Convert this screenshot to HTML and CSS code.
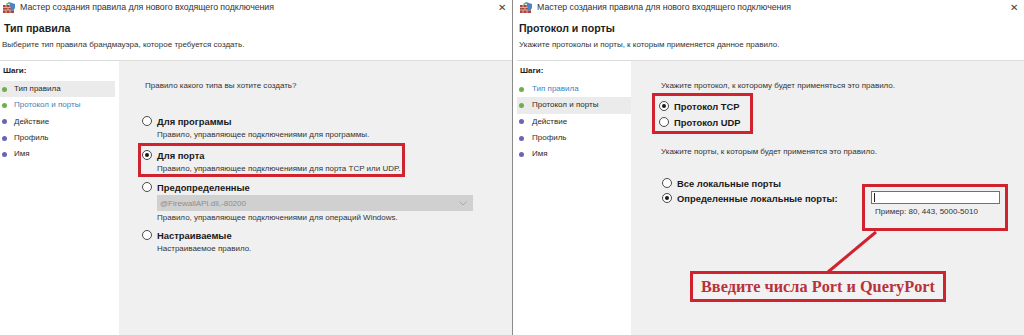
FILE: index.html
```html
<!DOCTYPE html>
<html lang="ru">
<head>
    <meta charset="UTF-8">
    <title>Мастер создания правила</title>
    <link rel="stylesheet" href="styles.css">
</head>
<body>
<div class="screen">

    <!-- Шаг 1 : тип правила -->
    <div class="dialog">
        <div class="titlebar">
            <svg class="app-icon" width="13" height="12" viewBox="0 0 13 12">
                <rect x="0" y="4" width="11" height="8" fill="#a9473a"/>
                <path d="M0 6.5h11M0 9h11M3 4v2.5M7 4v2.5M5 6.5V9M9 6.5V9M3 9v3M7 9v3" stroke="#e6c2b6" stroke-width="0.8"/>
                <path d="M6 1l6 2v3.5c0 2-2.5 3-3.5 3.5" fill="#4a86c7"/>
                <path d="M3 3l3-2 1 1-3 2z" fill="#5fa64a"/>
            </svg>
            <span class="title-text">Мастер создания правила для нового входящего подключения</span>
            <span class="close">&#x2715;</span>
        </div>
        <div class="header">
            <div class="page-title">Тип правила</div>
            <div class="page-sub">Выберите тип правила брандмауэра, которое требуется создать.</div>
        </div>
        <div class="body">
            <div class="steps">
                <div class="steps-head">Шаги:</div>
                <div class="step current"><span class="dot done"></span>Тип правила</div>
                <div class="step link"><span class="dot done"></span>Протокол и порты</div>
                <div class="step"><span class="dot"></span>Действие</div>
                <div class="step"><span class="dot"></span>Профиль</div>
                <div class="step"><span class="dot"></span>Имя</div>
            </div>
            <div class="main">
                <div class="question">Правило какого типа вы хотите создать?</div>
                <div class="options">
                    <div class="option">
                        <div class="opt-label"><span class="radio"></span>Для программы</div>
                        <div class="opt-desc">Правило, управляющее подключениями для программы.</div>
                    </div>
                    <div class="option marked">
                        <div class="opt-label"><span class="radio checked"></span>Для порта</div>
                        <div class="opt-desc">Правило, управляющее подключениями для порта TCP или UDP.</div>
                    </div>
                    <div class="option spaced">
                        <div class="opt-label"><span class="radio"></span>Предопределенные</div>
                        <div class="select">
                            <span>@FirewallAPI.dll,-80200</span>
                            <svg width="8" height="5" viewBox="0 0 8 5"><path d="M0.5 0.5L4 4 7.5 0.5" fill="none" stroke="#a8a8a8" stroke-width="1"/></svg>
                        </div>
                        <div class="opt-desc">Правило, управляющее подключениями для операций Windows.</div>
                    </div>
                    <div class="option spaced">
                        <div class="opt-label"><span class="radio"></span>Настраиваемые</div>
                        <div class="opt-desc">Настраиваемое правило.</div>
                    </div>
                </div>
            </div>
        </div>
    </div>

    <!-- Шаг 2 : протокол и порты -->
    <div class="dialog second">
        <div class="titlebar">
            <svg class="app-icon" width="13" height="12" viewBox="0 0 13 12">
                <rect x="0" y="4" width="11" height="8" fill="#a9473a"/>
                <path d="M0 6.5h11M0 9h11M3 4v2.5M7 4v2.5M5 6.5V9M9 6.5V9M3 9v3M7 9v3" stroke="#e6c2b6" stroke-width="0.8"/>
                <path d="M6 1l6 2v3.5c0 2-2.5 3-3.5 3.5" fill="#4a86c7"/>
                <path d="M3 3l3-2 1 1-3 2z" fill="#5fa64a"/>
            </svg>
            <span class="title-text">Мастер создания правила для нового входящего подключения</span>
            <span class="close">&#x2715;</span>
        </div>
        <div class="header">
            <div class="page-title">Протокол и порты</div>
            <div class="page-sub">Укажите протоколы и порты, к которым применяется данное правило.</div>
        </div>
        <div class="body">
            <div class="steps">
                <div class="steps-head">Шаги:</div>
                <div class="step link"><span class="dot done"></span>Тип правила</div>
                <div class="step current"><span class="dot done"></span>Протокол и порты</div>
                <div class="step"><span class="dot"></span>Действие</div>
                <div class="step"><span class="dot"></span>Профиль</div>
                <div class="step"><span class="dot"></span>Имя</div>
            </div>
            <div class="main wide">
                <div class="question">Укажите протокол, к которому будет применяться это правило.</div>
                <div class="proto-box">
                    <div class="opt-label"><span class="radio checked"></span>Протокол TCP</div>
                    <div class="opt-label"><span class="radio"></span>Протокол UDP</div>
                </div>
                <div class="question ports-q">Укажите порты, к которым будет применятся это правило.</div>
                <div class="ports">
                    <div class="port-radios">
                        <div class="opt-label"><span class="radio"></span>Все локальные порты</div>
                        <div class="opt-label"><span class="radio checked"></span>Определенные локальные порты:</div>
                    </div>
                    <div class="port-box">
                        <div class="port-input"><span class="caret"></span></div>
                        <div class="port-hint">Пример: 80, 443, 5000-5010</div>
                    </div>
                </div>
            </div>
        </div>
    </div>

    <!-- Пояснение поверх окна -->
    <svg class="pointer" width="1024" height="335" viewBox="0 0 1024 335">
        <line x1="876" y1="232" x2="828" y2="272" stroke="#d0232f" stroke-width="3"/>
    </svg>
    <div class="callout">Введите числа Port и QueryPort</div>
</div>
</body>
</html>
```

FILE: styles.css
```css
* {
    box-sizing: border-box;
}

body {
    margin: 0;
    font-family: "Liberation Sans", Arial, sans-serif;
    color: #1e1e1e;
    background-color: #ffffff;
}

.screen {
    position: relative;
    display: flex;
    width: 1024px;
    height: 335px;
    overflow: hidden;
}

.dialog {
    width: 512px;
    height: 335px;
    display: flex;
    flex-direction: column;
    background-color: #ffffff;
    white-space: nowrap;
}

.dialog.second {
    width: 512px;
    border-left: 1px solid #8a8a8a;
    padding-left: 4px;
}

.titlebar {
    height: 14px;
    display: flex;
    align-items: center;
    padding-left: 3px;
    padding-right: 6px;
}

.app-icon {
    flex: none;
    margin-right: 4px;
}

.title-text {
    font-size: 8.8px;
    letter-spacing: -0.05px;
    color: #333;
    flex: 1;
}

.close {
    font-size: 10px;
    color: #444;
}

.header {
    height: 47px;
    padding: 7px 0 0 4px;
    border-bottom: 1px solid #dcdcdc;
}

.second .header {
    padding-left: 2px;
}

.page-title {
    font-size: 10.6px;
    font-weight: bold;
    line-height: 14px;
    height: 18px;
}

.page-sub {
    font-size: 8px;
    line-height: 12px;
    color: #333;
    margin-left: -2px;
}

.second .page-sub {
    margin-left: 0;
}

.body {
    flex: 1;
    display: flex;
}

.steps {
    width: 119px;
    flex: none;
    padding-top: 2px;
    font-size: 8px;
}

.second .steps {
    width: 114px;
}

.steps-head {
    font-weight: bold;
    line-height: 16px;
    height: 18px;
    padding-left: 3px;
}

.step {
    height: 16.3px;
    line-height: 16.3px;
    display: flex;
    align-items: center;
    margin-right: 4px;
    padding-left: 2px;
    color: #2a2a2a;
}

.second .step {
    margin-right: 0;
}

.step.current {
    background-color: #ebebeb;
}

.step.link {
    color: #3c82c0;
}

.dot {
    width: 5px;
    height: 5px;
    border-radius: 50%;
    background-color: #6b63b5;
    margin-right: 7px;
}

.second .dot {
    margin-right: 8px;
}

.dot.done {
    background-color: #6bb04a;
}

.main {
    flex: 1;
    background-color: #f0f0f0;
    padding: 18px 0 0 26px;
    font-size: 8px;
}

.main.wide {
    padding-left: 30px;
}

.question {
    line-height: 14px;
    color: #333;
}

.options {
    margin: 21px 0 0 -7px;
}

.option {
    padding: 0 0 0 4px;
    width: 334px;
}

.option.marked {
    width: 267px;
    border: 3px solid #d0232f;
    padding: 2px 0 0 1px;
    margin-top: 1px;
    height: 34px;
}

.option.spaced {
    margin-top: 3px;
}

.opt-label {
    display: flex;
    align-items: center;
    height: 14px;
    font-size: 9.4px;
    font-weight: bold;
    color: #1a1a1a;
}

.opt-desc {
    line-height: 14px;
    padding-left: 15px;
    color: #333;
}

.radio {
    width: 10px;
    height: 10px;
    border: 1px solid #4a4a4a;
    border-radius: 50%;
    background-color: #ffffff;
    margin-right: 5px;
    display: flex;
    align-items: center;
    justify-content: center;
}

.radio.checked::after {
    content: "";
    width: 4px;
    height: 4px;
    border-radius: 50%;
    background-color: #1a1a1a;
}

.select {
    margin: 1px 0 0 15px;
    width: 316px;
    height: 16px;
    background-color: #d0d0d0;
    color: #8e8e8e;
    display: flex;
    align-items: center;
    justify-content: space-between;
    padding: 0 6px 0 3px;
}

.proto-box {
    margin: 0 0 0 -9px;
    width: 101px;
    height: 41px;
    border: 3px solid #d0232f;
    padding: 3px 0 0 4px;
    display: flex;
    flex-direction: column;
    gap: 2px;
}

.ports-q {
    margin-top: 11px;
}

.ports {
    display: flex;
    margin-top: 17px;
}

.port-radios {
    width: 200px;
    margin-left: 1px;
    display: flex;
    flex-direction: column;
    gap: 1px;
}

.port-box {
    margin-top: 8px;
    width: 146px;
    height: 47px;
    border: 3px solid #d0232f;
    padding: 4px 0 0 6px;
}

.port-input {
    width: 129px;
    height: 13px;
    background-color: #ffffff;
    border: 1px solid #3d7bc9;
    display: flex;
    align-items: center;
    padding-left: 2px;
}

.caret {
    width: 1px;
    height: 9px;
    background-color: #222;
}

.port-hint {
    margin-top: 2px;
    padding-left: 4px;
    line-height: 12px;
    font-size: 8px;
    color: #333;
}

.pointer {
    position: absolute;
    left: 0;
    top: 0;
    pointer-events: none;
}

.callout {
    position: absolute;
    left: 690px;
    top: 271px;
    width: 256px;
    height: 31px;
    border: 3px solid #d0232f;
    background-color: #f2f2f2;
    font-family: "Liberation Serif", "Times New Roman", serif;
    font-weight: bold;
    font-size: 16.3px;
    color: #b8323b;
    display: flex;
    align-items: center;
    justify-content: center;
}
```
